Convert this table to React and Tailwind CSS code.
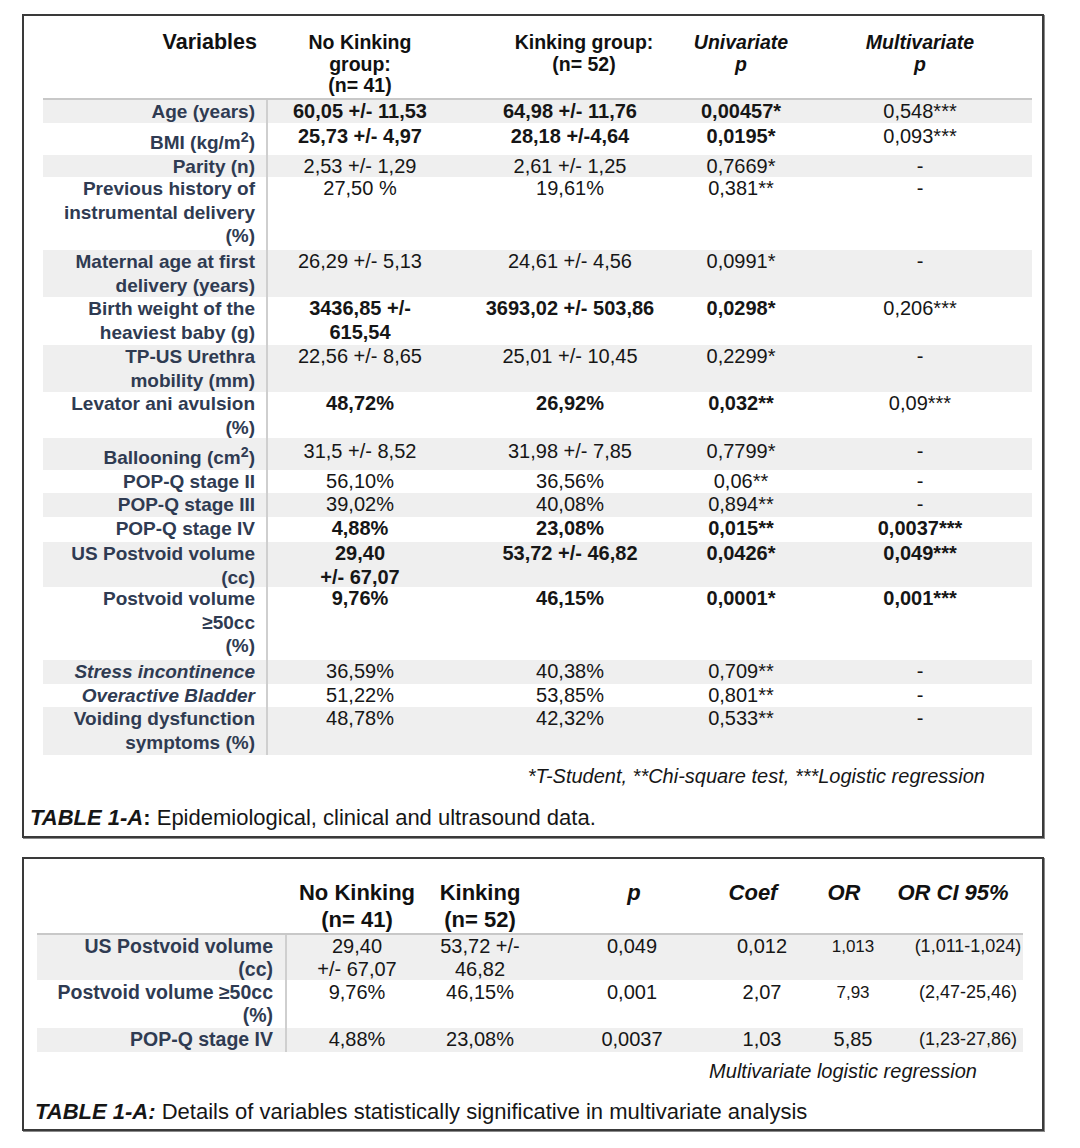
import React from 'react';

const T1_COLS = 'grid grid-cols-[225px_184px_222px_134px_224px]';
const T2_COLS = 'grid grid-cols-[250px_140px_106px_198px_62px_120px_110px]';

/* ── Table 1: epidemiological data ── */
const T1_ROWS = [
  { label: ['Age (years)'], h: 'h-[23px]', b: [1, 1, 1, 0], vals: ['60,05 +/- 11,53', '64,98 +/- 11,76', '0,00457*', '0,548***'] },
  { label: [<>BMI (kg/m<sup>2</sup>)</>], h: 'h-[32px]', sup: true, b: [1, 1, 1, 0], vals: ['25,73 +/- 4,97', '28,18 +/-4,64', '0,0195*', '0,093***'] },
  { label: ['Parity (n)'], h: 'h-[22px]', b: [0, 0, 0, 0], vals: ['2,53 +/- 1,29', '2,61 +/- 1,25', '0,7669*', '-'] },
  { label: ['Previous history of', 'instrumental delivery', '(%)'], h: 'h-[73px]', b: [0, 0, 0, 0], vals: ['27,50 %', '19,61%', '0,381**', '-'] },
  { label: ['Maternal age at first', 'delivery (years)'], h: 'h-[47px]', b: [0, 0, 0, 0], vals: ['26,29 +/- 5,13', '24,61 +/- 4,56', '0,0991*', '-'] },
  { label: ['Birth weight of the', 'heaviest baby (g)'], h: 'h-[48px]', b: [1, 1, 1, 0], vals: [['3436,85 +/-', '615,54'], '3693,02 +/- 503,86', '0,0298*', '0,206***'] },
  { label: ['TP-US Urethra', 'mobility (mm)'], h: 'h-[47px]', b: [0, 0, 0, 0], vals: ['22,56 +/- 8,65', '25,01 +/- 10,45', '0,2299*', '-'] },
  { label: ['Levator ani avulsion', '(%)'], h: 'h-[46px]', b: [1, 1, 1, 0], vals: ['48,72%', '26,92%', '0,032**', '0,09***'] },
  { label: [<>Ballooning (cm<sup>2</sup>)</>], h: 'h-[32px]', sup: true, b: [0, 0, 0, 0], vals: ['31,5 +/- 8,52', '31,98 +/- 7,85', '0,7799*', '-'] },
  { label: ['POP-Q stage II'], h: 'h-[23px]', b: [0, 0, 0, 0], vals: ['56,10%', '36,56%', '0,06**', '-'] },
  { label: ['POP-Q stage III'], h: 'h-[24px]', b: [0, 0, 0, 0], vals: ['39,02%', '40,08%', '0,894**', '-'] },
  { label: ['POP-Q stage IV'], h: 'h-[25px]', b: [1, 1, 1, 1], vals: ['4,88%', '23,08%', '0,015**', '0,0037***'] },
  { label: ['US Postvoid volume', '(cc)'], h: 'h-[45px]', b: [1, 1, 1, 1], vals: [['29,40', '+/- 67,07'], '53,72 +/- 46,82', '0,0426*', '0,049***'] },
  { label: ['Postvoid volume', '≥50cc', '(%)'], h: 'h-[73px]', b: [1, 1, 1, 1], vals: ['9,76%', '46,15%', '0,0001*', '0,001***'] },
  { label: ['Stress incontinence'], h: 'h-[24px]', italic: true, b: [0, 0, 0, 0], vals: ['36,59%', '40,38%', '0,709**', '-'] },
  { label: ['Overactive Bladder'], h: 'h-[23px]', italic: true, b: [0, 0, 0, 0], vals: ['51,22%', '53,85%', '0,801**', '-'] },
  { label: ['Voiding dysfunction', 'symptoms (%)'], h: 'h-[48px]', b: [0, 0, 0, 0], vals: ['48,78%', '42,32%', '0,533**', '-'] },
];

/* ── Table 2: multivariate details ── */
const T2_ROWS = [
  {
    label: ['US Postvoid volume', '(cc)'], h: 'h-[45px]',
    vals: [['29,40', '+/- 67,07'], ['53,72 +/-', '46,82'], '0,049', '0,012'],
    or: '1,013', orCls: 'text-[17px]', ci: '(1,011-1,024)',
  },
  {
    label: ['Postvoid volume ≥50cc', '(%)'], h: 'h-[48px] pt-[1px]',
    vals: ['9,76%', '46,15%', '0,001', '2,07'],
    or: '7,93', orCls: 'text-[17px]', ci: '(2,47-25,46)',
  },
  {
    label: ['POP-Q stage IV'], h: 'h-[24px]',
    vals: ['4,88%', '23,08%', '0,0037', '1,03'],
    or: '5,85', orCls: 'text-[20px]', ci: '(1,23-27,86)',
  },
];

function Lines({ v }) {
  const lines = Array.isArray(v) ? v : [v];
  return lines.map((l, i) => <div key={i}>{l}</div>);
}

function T1Row({ row, idx }) {
  return (
    <div className={`${T1_COLS} ${row.h} ${idx % 2 === 0 ? 'bg-[#efefef]' : ''}`}>
      <div
        className={`border-r-2 border-[#cfcfcf] pr-[11px] text-right text-[19px] font-bold text-[#2f3b52] whitespace-nowrap
          ${row.sup ? 'pt-[8px]' : ''} ${row.italic ? 'italic' : ''}`}
      >
        <Lines v={row.label} />
      </div>
      {row.vals.map((v, i) => (
        <div
          key={i}
          className={`flex justify-center text-center whitespace-nowrap text-[20px] text-[#161616]
            ${i === 1 ? 'pl-[14px]' : ''} ${row.sup ? 'pt-[2px]' : ''} ${row.b[i] ? 'font-bold' : ''}`}
        >
          <div><Lines v={v} /></div>
        </div>
      ))}
    </div>
  );
}

function T2Row({ row, idx }) {
  return (
    <div className={`${T2_COLS} ${row.h} ${idx % 2 === 0 ? 'bg-[#efefef]' : ''}`}>
      <div className="border-r-2 border-[#cfcfcf] pr-[12px] text-right text-[19.5px] font-bold text-[#2f3b52] whitespace-nowrap">
        <Lines v={row.label} />
      </div>
      {row.vals.map((v, i) => (
        <div key={i} className="flex justify-center text-center whitespace-nowrap text-[20px] text-[#161616]">
          <div><Lines v={v} /></div>
        </div>
      ))}
      <div className={`flex justify-center whitespace-nowrap text-[#161616] ${row.orCls}`}>{row.or}</div>
      <div className="flex justify-center whitespace-nowrap text-[18px] text-[#161616]">{row.ci}</div>
    </div>
  );
}

export default function App() {
  return (
    <div className="w-[1080px] h-[1148px] bg-white pt-[14px] font-['Liberation_Sans',Arial,sans-serif] text-[#161616]">
      {/* ── Table 1 ── */}
      <div className="ml-[22px] w-[1022px] border-2 border-[#3a3a3a] shadow-[1px_1px_0_#8a8a8a]">
        <div className="pl-[19px] pr-[10px]">
          <div className={`${T1_COLS} h-[84px] border-b-2 border-[#c8c8c8] pt-[16px] leading-[21.5px] text-[19.5px] font-bold text-[#111]`}>
            <div className="pr-[11px] text-right text-[21.5px]">Variables</div>
            <div className="text-center">
              <div>No Kinking</div>
              <div>group:</div>
              <div>(n= 41)</div>
            </div>
            <div className="pl-[42px] text-center">
              <div>Kinking group:</div>
              <div>(n= 52)</div>
            </div>
            <div className="flex justify-center text-center italic">
              <div>
                <div>Univariate</div>
                <div>p</div>
              </div>
            </div>
            <div className="text-center italic">
              <div>Multivariate</div>
              <div>p</div>
            </div>
          </div>

          <div className="leading-[23.5px]">
            {T1_ROWS.map((row, i) => (
              <T1Row key={i} row={row} idx={i} />
            ))}
          </div>

          <div className="mt-[10px] pr-[47px] text-right text-[20px] leading-[23.5px] italic">
            *T-Student, **Chi-square test, ***Logistic regression
          </div>
        </div>

        <div className="mt-[17px] pb-[6px] pl-[6px] text-[22px] leading-[24px]">
          <span className="font-bold italic">TABLE 1-A</span>
          <span className="font-bold">:</span> Epidemiological, clinical and ultrasound data.
        </div>
      </div>

      {/* ── Table 2 ── */}
      <div className="ml-[22px] mt-[19px] w-[1022px] border-2 border-[#3a3a3a] shadow-[1px_1px_0_#8a8a8a]">
        <div className="pl-[13px] pr-[19px]">
          <div className={`${T2_COLS} h-[76px] border-b-2 border-[#c8c8c8] pt-[20px] leading-[27px] text-[22px] font-bold text-[#111]`}>
            <div />
            <div className="text-center">
              <div>No Kinking</div>
              <div>(n= 41)</div>
            </div>
            <div className="flex justify-center text-center">
              <div>
                <div>Kinking</div>
                <div>(n= 52)</div>
              </div>
            </div>
            <div className="pl-[4px] text-center italic">p</div>
            <div className="flex justify-center pr-[18px] italic">Coef</div>
            <div className="flex justify-center pr-[18px] italic">OR</div>
            <div className="flex justify-center whitespace-nowrap pr-[30px] italic">OR CI 95%</div>
          </div>

          <div className="leading-[23.5px]">
            {T2_ROWS.map((row, i) => (
              <T2Row key={i} row={row} idx={i} />
            ))}
          </div>

          <div className="mt-[8px] pr-[46px] text-right text-[20px] leading-[23.5px] italic">
            Multivariate logistic regression
          </div>
        </div>

        <div className="mt-[17px] pb-[5px] pl-[11px] text-[22px] leading-[24px]">
          <span className="font-bold italic">TABLE 1-A:</span> Details of variables statistically significative in multivariate analysis
        </div>
      </div>
    </div>
  );
}
